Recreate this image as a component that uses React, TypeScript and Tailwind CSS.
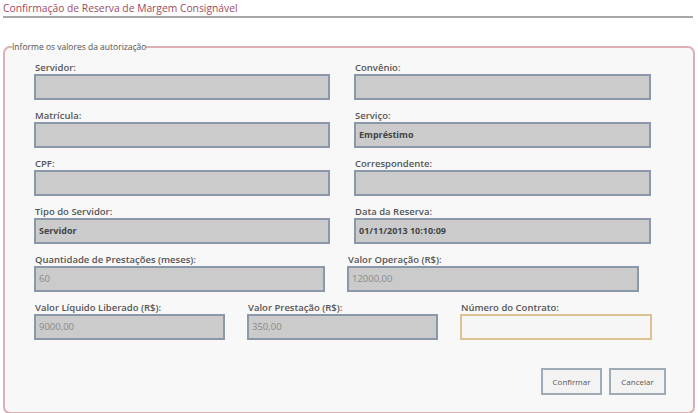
import React from 'react';

type Field = {
  label: string;
  value?: string;
  width: string;
  strong?: boolean;
  editable?: boolean;
};

const rows: Field[][] = [
  [
    { label: 'Servidor:', width: 'w-[296px]' },
    { label: 'Convênio:', width: 'w-[297px]' },
  ],
  [
    { label: 'Matrícula:', width: 'w-[296px]' },
    { label: 'Serviço:', value: 'Empréstimo', width: 'w-[297px]', strong: true },
  ],
  [
    { label: 'CPF:', width: 'w-[296px]' },
    { label: 'Correspondente:', width: 'w-[297px]' },
  ],
  [
    { label: 'Tipo do Servidor:', value: 'Servidor', width: 'w-[296px]', strong: true },
    { label: 'Data da Reserva:', value: '01/11/2013 10:10:09', width: 'w-[297px]', strong: true },
  ],
  [
    { label: 'Quantidade de Prestações (meses):', value: '60', width: 'w-[291px]' },
    { label: 'Valor Operação (R$):', value: '12000,00', width: 'w-[292px]' },
  ],
  [
    { label: 'Valor Líquido Liberado (R$):', value: '9000,00', width: 'w-[191px]' },
    { label: 'Valor Prestação (R$):', value: '350,00', width: 'w-[191px]' },
    { label: 'Número do Contrato:', width: 'w-[192px]', editable: true },
  ],
];

const FormField: React.FC<{ field: Field }> = ({ field }) => (
  <div className={`flex flex-col ${field.width}`}>
    <label className="text-[9.5px] leading-[13px] font-semibold text-[#555] pl-[1px]">{field.label}</label>
    <div
      className={`h-[26px] flex items-center px-[3px] border-2 ${
        field.editable ? 'bg-[#f7f7f7] border-[#dcc28e]' : 'bg-[#cbcbcb] border-[#8a98aa]'
      }`}
    >
      {field.value && (
        <span
          className={
            field.strong
              ? 'text-[9px] font-bold text-[#444]'
              : 'text-[9.5px] text-[#8a8a8a]'
          }
        >
          {field.value}
        </span>
      )}
    </div>
  </div>
);

export default function App() {
  return (
    <div className="w-[698px] h-[413px] bg-white overflow-hidden font-['Open_Sans',sans-serif]">
      {/* Page title */}
      <div className="pt-[1px] pl-[3px] pr-[5px]">
        <h1 className="text-[10.3px] leading-[14px] text-[#a04a60] pb-[1px]">
          Confirmação de Reserva de Margem Consignável
        </h1>
        <div className="h-[2px] bg-[#a8a8a8]" />
      </div>

      {/* Authorization fieldset */}
      <fieldset className="mt-[24px] ml-[3px] w-[692px] h-[372px] border-2 border-[#ddb0b6] rounded-[7px] bg-[#f8f8f8] pl-[29px] pr-[27px] pt-[9px]">
        <legend className="ml-[-22px] px-0 text-[8.5px] leading-[10px] text-[#555]">
          Informe os valores da autorização
        </legend>
        <div className="flex flex-col gap-[9px]">
          {rows.map((row, i) => (
            <div key={i} className={`flex ${row.length === 3 ? 'gap-[22px]' : i === 4 ? 'gap-[22px]' : 'gap-[24px]'}`}>
              {row.map((f) => (
                <FormField key={f.label} field={f} />
              ))}
            </div>
          ))}
        </div>
        <div className="flex justify-end gap-[7px] mt-[28px]">
          <button className="w-[61px] h-[27px] bg-[#f3f3f3] border-2 border-[#a0abb8] text-[8px] text-[#555]">
            Confirmar
          </button>
          <button className="w-[57px] h-[27px] bg-[#f3f3f3] border-2 border-[#a0abb8] text-[8px] text-[#555]">
            Cancelar
          </button>
        </div>
      </fieldset>
    </div>
  );
}
